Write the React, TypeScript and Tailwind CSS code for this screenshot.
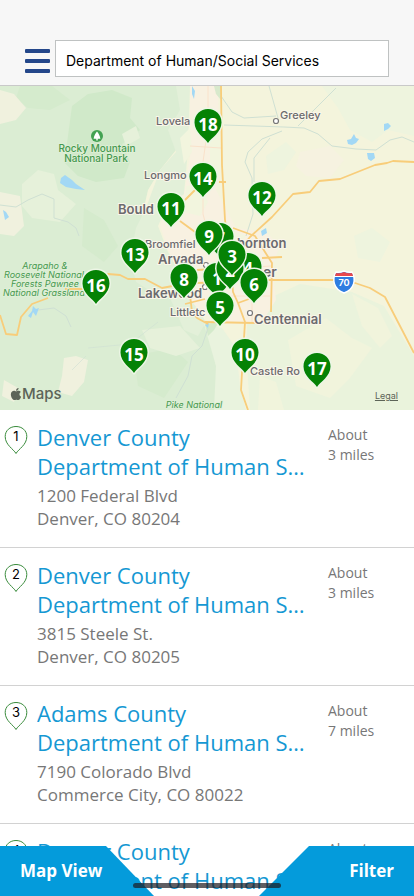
import { FaApple } from 'react-icons/fa'

const pins = [
  { n: 18, x: 208, y: 23 },
  { n: 14, x: 203, y: 77 },
  { n: 12, x: 262, y: 96 },
  { n: 11, x: 171, y: 107 },
  { n: 7, x: 220, y: 137 },
  { n: 9, x: 209, y: 135 },
  { n: 13, x: 135, y: 153 },
  { n: 4, x: 248, y: 167 },
  { n: 1, x: 217, y: 177 },
  { n: 2, x: 230, y: 169 },
  { n: 3, x: 232, y: 155 },
  { n: 8, x: 184, y: 178 },
  { n: 6, x: 254, y: 183 },
  { n: 16, x: 96, y: 184 },
  { n: 5, x: 220, y: 206 },
  { n: 15, x: 134, y: 253 },
  { n: 10, x: 245, y: 253 },
  { n: 17, x: 317, y: 267 },
]

const towns = [
  { name: 'Lovela', x: 156, y: 39, size: 11 },
  { name: 'Greeley', x: 280, y: 33, size: 11 },
  { name: 'Longmo', x: 144, y: 93, size: 11 },
  { name: 'Bould', x: 118, y: 128, size: 13 },
  { name: 'Broomfiel', x: 145, y: 162, size: 11 },
  { name: 'hornton', x: 237, y: 162, size: 13 },
  { name: 'Arvada', x: 158, y: 178, size: 13 },
  { name: 'er', x: 263, y: 191, size: 14 },
  { name: 'Lakewood', x: 138, y: 212, size: 13 },
  { name: 'Littletc', x: 170, y: 230, size: 11 },
  { name: 'Centennial', x: 254, y: 238, size: 13 },
  { name: 'Castle Ro', x: 250, y: 289, size: 11 },
]

const highways = [
  'M221 0L222 79L225 134L230 170L233 206L238 217L245 236L244 252L241 304L248 324',
  'M414 76L393 75L387 77L375 79L340 93L319 95L310 106L293 108L272 131L250 151L236 168',
  'M233 142L255 150L265 166L272 177L271 226',
  'M262 172L282 171',
  'M230 194H336L355 197L370 202L385 211L414 267',
  'M205 236L255 237',
  'M238 217L249 213',
  'M0 229L6 248L17 249L21 231L32 218L48 212M65 203H87L108 188L120 189L128 193L145 193L162 202L183 198',
  'M197 184L230 182M196 197L225 196',
  'M185 114L196 103M180 135L195 146L225 168',
  'M185 218L205 213M190 209L192 226L197 232L208 238M219 96H226',
]

const places = [
  { n: 1, title: 'Denver County', street: '1200 Federal Blvd', city: 'Denver, CO 80204', miles: 3 },
  { n: 2, title: 'Denver County', street: '3815 Steele St.', city: 'Denver, CO 80205', miles: 3 },
  { n: 3, title: 'Adams County', street: '7190 Colorado Blvd', city: 'Commerce City, CO 80022', miles: 7 },
  { n: 4, title: 'Denver County', street: '4685 Peoria St.', city: 'Denver, CO 80239', miles: 8 },
]

function Terrain() {
  return (
    <g>
      <path fill="#f4f4dc" d="M0 0H414V324H0Z" />
      <path fill="#dbedd3" d="M0 0H188L184 20L177 38L172 50L176 64L160 84L148 104L142 130L150 150L168 176L182 202L190 224L204 238L213 262L218 290L216 324H0Z" />
      <path fill="#e3f0d9" d="M176 0H190L188 64L184 108L166 122L158 140L168 166L182 190L190 212L206 236L198 250L184 244L170 212L152 206L136 196L130 172L136 142L146 122L160 84L176 66L168 44L180 24Z" />
      <path fill="#e9f3de" d="M204 238L222 242L236 262L240 300L246 324H214L216 280Z" />
      <path fill="#eaf3dc" d="M248 222L300 198L352 206L384 220L414 270V324H250L246 262Z" />
      <path fill="#f1f4dc" d="M288 254L326 232L352 252L372 262L350 292L330 312L296 300ZM352 208L378 222L392 250L380 262L362 240ZM260 290L276 296L284 324H258Z" />
      <path fill="#eef4de" d="M322 0H414V50L388 44L372 56L350 44L338 22ZM266 70L286 56L296 66L284 84L268 88ZM354 150L372 142L390 156L380 176L358 172Z" />
      <path fill="#f6f2e0" d="M300 66L330 60L344 74L330 92L306 90L296 80Z" />
      <path fill="#f8f1e1" d="M190 0H218L220 90L216 104L236 142L266 146L280 160L272 180L276 214L262 236L232 238L206 230L190 214L180 190L170 168L160 140L166 122L184 110L190 70Z" />
      <path fill="#f2f5de" d="M186 100L198 98L208 116L200 130L184 126ZM180 52L190 42L192 66L184 78ZM210 40H220V90H210ZM228 142L246 150L240 158L230 154Z" />
      {/* peaks and valleys */}
      <path fill="#d0e9c9" d="M72 20L88 8L112 4L132 12L130 32L140 44L122 58L130 76L124 92L96 96L78 90L64 76L68 50Z" />
      <path fill="#d5ebcd" d="M20 0H52L70 14L50 24L28 22L16 12ZM84 122L104 134L118 160L104 176L82 160ZM134 270L172 262L188 276L164 312L138 300Z" />
      <path fill="#e6f1da" d="M22 98L38 84L54 88L58 104L76 118L60 136L32 132L22 120ZM142 244L180 240L200 262L176 270L150 262ZM122 48L136 40L140 52L126 60Z" />
      <path fill="#f0f1de" d="M0 4L14 8L26 22L16 34L0 38ZM0 106L20 110L24 140L14 150L0 148ZM64 272L76 270L88 274L84 296L72 310L58 306L62 290ZM4 294L18 302L14 316L2 310Z" />
      <path fill="#cbe6c3" d="M214 0H222L221 14L216 8ZM205 238L219 236L214 244L208 250Z" opacity=".7" />
      {/* water */}
      <path fill="#a2d8f5" d="M61 92L65 89L72 94L76 98L85 104L76 103L66 101L60 97ZM3 124L6 126L9 131L5 134ZM192 0L195 5L194 13L192 8Z" />
      <path fill="#a2d8f5" d="M347 54L351 53L354 48L356 52L359 53L356 57L352 59L348 58ZM384 38L388 37L391 40L388 43L384 45ZM367 67L374 67L375 72L371 75L368 73ZM261 145L266 142L267 147L262 150Z" />
      <path fill="#a2d8f5" d="M28 230L32 225L33 220L36 223L39 222L36 230L33 226L31 232ZM205 239L209 237L208 242Z" />
      {/* rivers and minor roads */}
      <g fill="none" stroke="#cfe0d3" strokeWidth="1">
        <path d="M0 119L16 121L28 114L42 108L54 113L54 132L68 136L76 142L79 150" />
        <path d="M221 10L232 26L244 32L276 30M269 0L278 32M336 2L312 26L298 40M224 39L284 41L304 42L318 48L332 60L356 63L376 64L390 54L402 51L414 56" />
        <path d="M282 45L262 53L248 66L245 76L252 92L253 128L246 150M270 52L254 72L254 96" />
        <path d="M38 224L54 222L66 230L71 241M208 242L202 260L192 270L188 290L176 312" />
        <path d="M88 262L130 258L158 236M72 284L86 270" opacity=".6" />
      </g>
      <g fill="none" stroke="#fae2cb" strokeWidth="1">
        <path d="M208 0V40L203 76V128L210 154M190 60L221 62M196 184L272 180M216 210H270M252 194V236" />
      </g>
    </g>
  )
}

function MapPin({ n, x, y }: { n: number; x: number; y: number }) {
  return (
    <g transform={`translate(${x} ${y})`}>
      <path
        d="M0 34C-3 29 -13.5 23.5 -13.5 13.5C-13.5 5.5 -7.5 0 0 0C7.5 0 13.5 5.5 13.5 13.5C13.5 23.5 3 29 0 34Z"
        fill="#058205"
        stroke="#edf6e6"
        strokeWidth="3"
        strokeLinejoin="round"
        paintOrder="stroke"
      />
      <text y="22" textAnchor="middle" className="fill-white font-['Open_Sans',sans-serif] text-[17px] font-bold">
        {n}
      </text>
    </g>
  )
}

function ResultsMap() {
  return (
    <section aria-label="Map" className="relative shrink-0">
      <svg viewBox="0 0 414 324" className="block w-full font-[Inter,sans-serif]">
        <Terrain />
        <g fill="none" stroke="#f8cd7a" strokeWidth="1.8" strokeLinejoin="round">
          {highways.map((d) => <path key={d} d={d} />)}
        </g>

        <g fill="#fff" stroke="#777" strokeWidth="1.2">
          <circle cx="276" cy="35" r="2.5" />
          <circle cx="206" cy="179" r="2.5" />
          <circle cx="205" cy="201" r="2.5" />
          <circle cx="250" cy="227" r="2.5" />
        </g>

        <g fill="#6b6a6e" stroke="#faf6e9" strokeWidth="2" paintOrder="stroke">
          {towns.map((t) => (
            <text key={t.name} x={t.x} y={t.y} fontSize={t.size} fontWeight={t.size > 11 ? 600 : 500}>{t.name}</text>
          ))}
        </g>

        {/* parks and forests */}
        <circle cx="97" cy="50" r="6" fill="#43a252" />
        <path fill="#fff" d="M97 45.5C95.8 46.5 94 50 93.6 52.8H96.3V54.4H97.7V52.8H100.4C100 50 98.2 46.5 97 45.5Z" />
        <g fill="#46994f" stroke="#e0f0d8" strokeWidth="1.5" paintOrder="stroke" textAnchor="middle">
          <g fontSize="10" fontWeight="500">
            <text x="97" y="66">Rocky Mountain</text>
            <text x="96" y="76">National Park</text>
          </g>
          <g fontSize="9" fontStyle="italic">
            <text x="45" y="183">Arapaho &amp;</text>
            <text x="44" y="192">Roosevelt National</text>
            <text x="45" y="201">Forests Pawnee</text>
            <text x="44" y="210">National Grassland</text>
            <text x="194" y="322">Pike National</text>
          </g>
        </g>

        {/* interstate shield */}
        <g>
          <path d="M336 186Q340 187 344 185Q348 187 352 186C356 193 355 203 344 207C333 203 332 193 336 186Z" fill="#2f7de1" stroke="#fff" strokeWidth="1.5" />
          <path d="M336 187Q340 188 344 186Q348 188 352 187L353 190H335Z" fill="#e8484d" />
          <path d="M335 190.5H353" stroke="#fff" />
          <text x="344" y="200" textAnchor="middle" fill="#fff" fontSize="9" fontWeight="700">70</text>
        </g>

        {pins.map((p) => <MapPin key={p.n} {...p} />)}
      </svg>

      <div className="absolute inset-x-0 bottom-1 flex items-end justify-between pr-4 pl-2.5 font-[Inter,sans-serif] text-[#5d6458]">
        <span className="flex items-center text-[15px] leading-6 font-medium">
          <FaApple className="h-3.5 w-3" />
          Maps
        </span>
        <a href="#legal" className="text-[9px] leading-5 underline">Legal</a>
      </div>
    </section>
  )
}

function PlaceRow({ place }: { place: (typeof places)[number] }) {
  return (
    <li className="grid grid-cols-[37px_minmax(0,1fr)_86px] border-b border-[#d2d2d2] pt-[13px] pb-[17px]">
      <svg viewBox="0 0 24 30" className="mt-[2px] ml-1 h-[30px] w-6">
        <path d="M12 28.5C9.5 24 1.2 20 1.2 11.5C1.2 5.5 6 1.5 12 1.5C18 1.5 22.8 5.5 22.8 11.5C22.8 20 14.5 24 12 28.5Z" fill="#fff" stroke="#398b3b" strokeWidth="1" />
        <text x="12" y="16" textAnchor="middle" className="fill-black font-[Inter,sans-serif] text-[13px]">{place.n}</text>
      </svg>
      <div className="pr-5">
        <a href={`#place-${place.n}`} className="block text-[22px] leading-[29px] text-[#1598d3]">
          <span className="block truncate">{place.title}</span>
          <span className="block truncate">Department of Human Services</span>
        </a>
        <p className="mt-[3px] text-[17px] leading-[23px]">
          {place.street}
          <br />
          {place.city}
        </p>
      </div>
      <p className="mt-[2px] text-sm leading-5">
        About
        <br />
        {place.miles} miles
      </p>
    </li>
  )
}

export default function App() {
  return (
    <div className="flex h-screen flex-col overflow-hidden bg-white font-['Open_Sans',sans-serif] text-[#777]">
      <header className="flex shrink-0 items-center gap-1 border-b border-[#c9c9c9] bg-[#f7f7f7] pt-10 pr-[25px] pb-2 pl-6">
        <button aria-label="Menu" className="flex h-9 w-[27px] flex-col items-center justify-center gap-1.5 pt-1">
          <span className="h-1 w-[25px] rounded-[1px] bg-[#24478a]" />
          <span className="h-1 w-[25px] rounded-[1px] bg-[#24478a]" />
          <span className="h-1 w-[25px] rounded-[1px] bg-[#24478a]" />
        </button>
        <input
          aria-label="Search"
          defaultValue="Department of Human/Social Services"
          className="h-[37px] min-w-0 flex-1 border border-[#bfc2c2] bg-white px-2.5 pt-1 font-[Inter,sans-serif] text-sm text-black outline-none"
        />
      </header>

      <ResultsMap />

      <ul className="min-h-0 flex-1 overflow-y-auto [scrollbar-width:none]">
        {places.map((p) => <PlaceRow key={p.n} place={p} />)}
      </ul>

      {/* Bottom tabs */}
      <nav className="pointer-events-none fixed inset-x-0 bottom-0 flex h-[50px] justify-between text-[17px] font-bold text-white">
        <button className="pointer-events-auto w-[154px] bg-[#049bdb] pl-5 text-left [clip-path:polygon(0_0,106px_0,100%_100%,0_100%)]">
          Map View
        </button>
        <button className="pointer-events-auto w-[155px] bg-[#049bdb] pr-5 text-right [clip-path:polygon(50px_0,100%_0,100%_100%,0_100%)]">
          Filter
        </button>
        <div className="absolute bottom-2 left-1/2 h-[5px] w-[148px] -translate-x-1/2 rounded-full bg-[#1d1a20]/70" />
      </nav>
    </div>
  )
}
